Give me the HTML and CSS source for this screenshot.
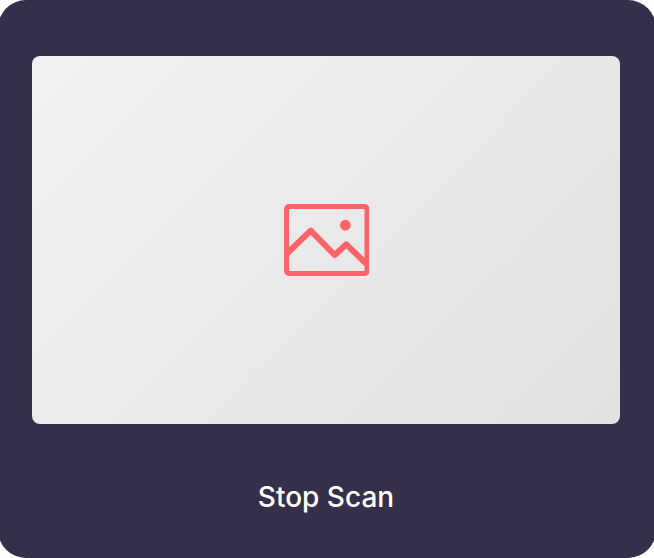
FILE: index.html
```html
<!DOCTYPE html>
<html lang="en">
<head>
<meta charset="utf-8">
<title>Scan</title>
<link rel="stylesheet" href="styles.css">
</head>
<body>
<main class="card">
  <div class="preview">
    <svg class="icon" viewBox="0 0 86 72" role="img" aria-label="Image">
      <rect x="3.500" y="2.500" width="80.500" height="67" rx="2.500"/>
      <path class="hills" d="M4 49.500 27.700 26.700 51.700 51 63.300 40.300 83.500 60"/>
      <circle cx="62.300" cy="21.200" r="5.400"/>
    </svg>
  </div>
  <button class="stop" type="button">Stop Scan</button>
</main>
</body>
</html>
```
FILE: styles.css
```css
* { box-sizing: border-box; }
body { margin: 0; background: #fff; font-family: Inter, sans-serif; overflow-x: hidden; }
.card {
  min-height: 100vh;
  margin: 0 -2px;
  padding: 56px 36px 30px 34px;
  display: flex;
  flex-direction: column;
  background: #352f49;
  border-radius: 28px;
}
.preview {
  height: 368px;
  display: grid;
  place-items: center;
  border-radius: 8px;
  background: linear-gradient(135deg, #f1f1f1, #e2e2e2);
}
.icon {
  width: 86px;
  height: 72px;
  fill: none;
  stroke: #ff6369;
  stroke-width: 5;
  stroke-linejoin: round;
}
.icon .hills { stroke-width: 6; }
.icon circle { fill: #ff6369; stroke: none; }
.stop {
  margin-top: 42px;
  padding: 0;
  border: 0;
  background: none;
  color: #fff;
  font: 500 28px/62px Inter, sans-serif;
  cursor: pointer;
}
```
